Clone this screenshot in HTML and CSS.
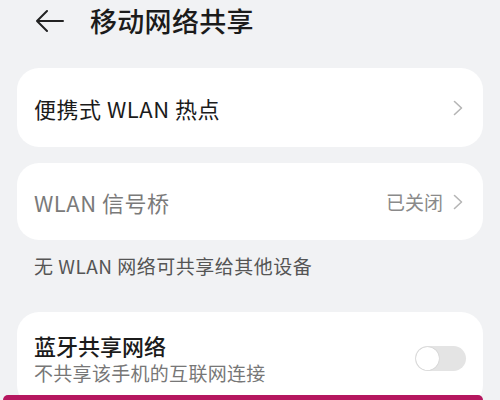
FILE: index.html
```html
<!DOCTYPE html>
<html lang="zh-CN">
<head>
    <meta charset="UTF-8">
    <meta name="viewport" content="width=device-width, initial-scale=1.0">
    <title>移动网络共享</title>
    <link rel="stylesheet" href="styles.css">
</head>
<body>
    <div class="header">
        <svg class="back" width="28" height="24" viewBox="0 0 28 24">
            <path d="M11 2 L1 12 L11 22 M1 12 H27" fill="none" stroke="#222" stroke-width="2" stroke-linecap="round" stroke-linejoin="round"/>
        </svg>
        <h1>移动网络共享</h1>
    </div>

    <div class="card row first">
        <span class="label">便携式 WLAN 热点</span>
        <svg class="chevron" width="10" height="16" viewBox="0 0 10 16">
            <path d="M1.5 1.5 L8.5 8 L1.5 14.5" fill="none" stroke="#b5b5b5" stroke-width="1.6" stroke-linecap="round" stroke-linejoin="round"/>
        </svg>
    </div>

    <div class="card row second">
        <span class="label muted">WLAN 信号桥</span>
        <span class="value">已关闭</span>
        <svg class="chevron" width="10" height="16" viewBox="0 0 10 16">
            <path d="M1.5 1.5 L8.5 8 L1.5 14.5" fill="none" stroke="#b5b5b5" stroke-width="1.6" stroke-linecap="round" stroke-linejoin="round"/>
        </svg>
    </div>

    <div class="hint">无 WLAN 网络可共享给其他设备</div>

    <div class="card row third">
        <div class="text">
            <div class="label strong">蓝牙共享网络</div>
            <div class="sub">不共享该手机的互联网连接</div>
        </div>
        <div class="toggle"><div class="knob"></div></div>
    </div>

    <div class="bottom-bar"></div>
</body>
</html>
```

FILE: styles.css
```css
body {
    margin: 0;
    background-color: #f1f2f4;
    font-family: "Noto Sans CJK SC", "Noto Sans", sans-serif;
    color: #1b1b1b;
    overflow: hidden;
}
.header {
    height: 42px;
    display: flex;
    align-items: center;
    padding-left: 36px;
}
.header h1 {
    margin: 0 0 0 26px;
    font-size: 27px;
    font-weight: 500;
    line-height: 42px;
    letter-spacing: 0.3px;
}
.card {
    background-color: #fff;
    border-radius: 22px;
    margin: 0 17px;
    box-sizing: border-box;
}
.row {
    display: flex;
    align-items: center;
    padding: 0 20px 0 17px;
}
.first {
    margin-top: 26px;
    height: 79px;
}
.second {
    margin-top: 16px;
    height: 77px;
}
.label {
    font-size: 22px;
    line-height: 28px;
    letter-spacing: 0.5px;
    flex: 1;
}
.muted {
    color: #7a7a7a;
}
.strong {
    font-weight: 500;
    letter-spacing: 0;
}
.value {
    font-size: 19px;
    color: #8a8a8a;
    margin-right: 10px;
}
.chevron {
    display: block;
}
.hint {
    margin: 14px 34px 0;
    font-size: 19px;
    line-height: 24px;
    letter-spacing: 0.5px;
    color: #555;
}
.third {
    margin-top: 34px;
    padding: 19px 17px 20px 17px;
}
.text {
    flex: 1;
}
.sub {
    font-size: 19px;
    line-height: 28px;
    letter-spacing: 0.3px;
    color: #777;
}
.toggle {
    width: 51px;
    height: 25px;
    border-radius: 13px;
    background-color: #e4e4e4;
    position: relative;
    margin-top: -2px;
}
.knob {
    position: absolute;
    left: 1px;
    top: 1px;
    width: 23px;
    height: 23px;
    border-radius: 50%;
    background-color: #fff;
    box-shadow: 0 0 1px rgba(0, 0, 0, 0.3);
}
.bottom-bar {
    position: fixed;
    left: 3px;
    right: 17px;
    bottom: 0;
    height: 5px;
    background-color: #b5175f;
    border-radius: 8px 8px 0 0;
}
```
